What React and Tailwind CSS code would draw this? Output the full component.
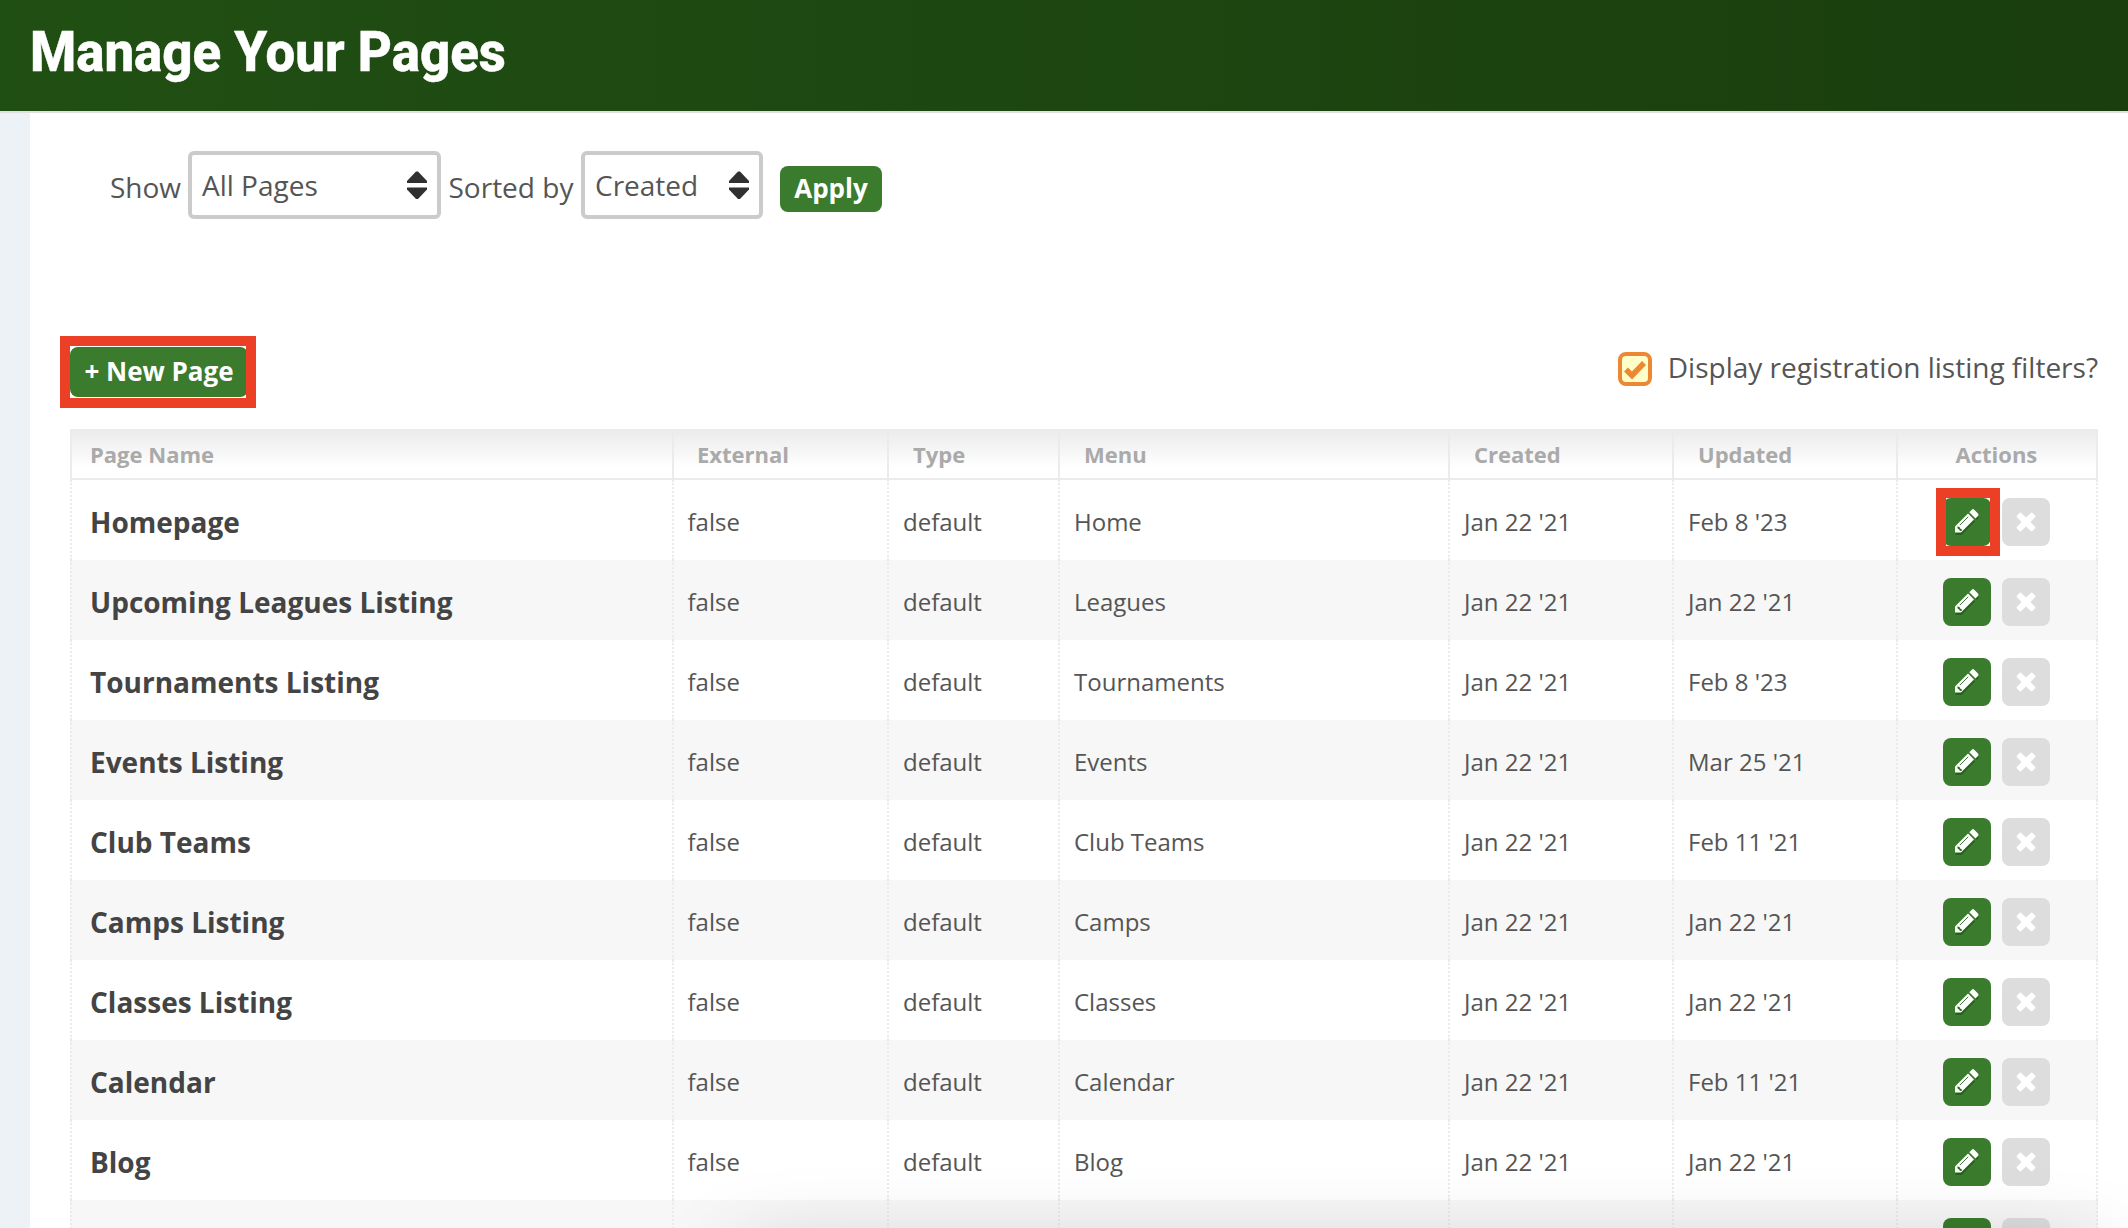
import React from "react";

const COLS =
  "grid grid-cols-[602px_215px_171px_390px_224px_224px_202px]";

const ROWS = [
  ["Homepage", "Home", "Jan 22 '21", "Feb 8 '23"],
  ["Upcoming Leagues Listing", "Leagues", "Jan 22 '21", "Jan 22 '21"],
  ["Tournaments Listing", "Tournaments", "Jan 22 '21", "Feb 8 '23"],
  ["Events Listing", "Events", "Jan 22 '21", "Mar 25 '21"],
  ["Club Teams", "Club Teams", "Jan 22 '21", "Feb 11 '21"],
  ["Camps Listing", "Camps", "Jan 22 '21", "Jan 22 '21"],
  ["Classes Listing", "Classes", "Jan 22 '21", "Jan 22 '21"],
  ["Calendar", "Calendar", "Jan 22 '21", "Feb 11 '21"],
  ["Blog", "Blog", "Jan 22 '21", "Jan 22 '21"],
  ["", "", "", ""],
];

const HEADS = [
  ["Page Name", "pl-[18px]"],
  ["External", "pl-[23px]"],
  ["Type", "pl-6"],
  ["Menu", "pl-6"],
  ["Created", "pl-6"],
  ["Updated", "pl-6"],
  ["Actions", "pl-[57.500px]"],
];

function Arrows() {
  return (
    <svg width="22" height="28" viewBox="0 0 22 28" fill="#303030">
      <path d="M10 .5h2L21 10v2H1v-2z" />
      <path d="M1 16.500h20v2L12 28h-2L1 18.500z" />
    </svg>
  );
}

function SelectBox({ label, className }) {
  return (
    <div
      className={
        "flex h-[68px] items-center justify-between rounded-md border-4 border-[#cbcbcb] bg-white pl-[10px] pr-[9px] text-[28px] text-[#555] " +
        className
      }
    >
      <span className="whitespace-nowrap pb-px">{label}</span>
      <Arrows />
    </div>
  );
}

function Pencil() {
  return (
    <svg width="26" height="28" viewBox="0 0 26 28" className="overflow-visible">
      <g fill="#1c4d12" opacity=".6" transform="translate(0.500 2.500)">
        <path d="M1 18.500 14.500 5l6 6L7 24.500H1z" />
        <path d="M16 3.500 18.500 1l6 6-2.500 2.500z" />
      </g>
      <path d="M1 18.500 14 5.500l6 6L7 24.500H1z" fill="#fff" />
      <path
        d="M15.300 4.200 17.800 1.700q1.200-1.200 2.400 0l3.800 3.800q1.200 1.200 0 2.400l-2.600 2.500z"
        fill="#fff"
      />
      <path d="M5.800 17.200 14.200 8.800" stroke="#3a7b2d" strokeWidth="1" />
      <path d="M3.300 18.600l2.300.3.400 1.600 1.600.5.300 1.700-1.800.2-1-1.500-1.500-.8z" fill="#2b6a20" />
    </svg>
  );
}

function Cross() {
  return (
    <svg width="20" height="20" viewBox="0 0 20 20">
      <path
        d="M.9 5.200Q.2 4.300.9 3.500L3.500.9Q4.300.2 5.200.9L10 5.600 14.800.9Q15.700.2 16.500.9l2.600 2.600q.7.800 0 1.700L14.400 10l4.700 4.800q.7.900 0 1.700l-2.600 2.600q-.8.700-1.700 0L10 14.400l-4.800 4.700q-.9.700-1.700 0L.9 16.500q-.7-.8 0-1.700L5.600 10z"
        fill="#fff"
      />
    </svg>
  );
}

function Row({ row, index }) {
  const cell = "border-l-2 border-dotted border-[#ebebeb] flex items-center pb-[1px]";
  return (
    <div
      className={
        COLS + " h-20 text-[24px] text-[#555] " + (index % 2 ? "bg-[#f7f7f7]" : "bg-white")
      }
    >
      <div className={cell + " pl-[18px] text-[28px] font-bold text-[#444]"}>
        <span className="pt-[4px]">{row[0]}</span>
      </div>
      <div className={cell + " pl-[13.500px]"}>
        <span className="pt-1">{row[0] && "false"}</span>
      </div>
      <div className={cell + " pl-[14px]"}>
        <span className="pt-1">{row[0] && "default"}</span>
      </div>
      <div className={cell + " pl-[14px]"}>
        <span className="pt-1">{row[1]}</span>
      </div>
      <div className={cell + " pl-[14px]"}>
        <span className="pt-1">{row[2]}</span>
      </div>
      <div className={cell + " pl-[14px]"}>
        <span className="pt-1">{row[3]}</span>
      </div>
      <div className="flex items-start gap-[11px] border-x-2 border-dotted border-[#ebebeb] pl-[45px] pt-[18px]">
        <div className="relative flex h-12 w-12 items-center justify-center rounded-lg bg-[#3a7b2d]">
          <Pencil />
          {index === 0 && (
            <span className="absolute -left-[7px] -top-[10px] h-[68px] w-16 border-10 border-[#eb4026]" />
          )}
        </div>
        <div className="flex h-12 w-12 items-center justify-center rounded-lg bg-[#dddddd]">
          <Cross />
        </div>
      </div>
    </div>
  );
}

export default function App() {
  return (
    <div className="relative flex h-[1228px] w-[2128px] flex-col overflow-hidden bg-[#edf2f6] font-['Open_Sans',sans-serif]">
      <header className="h-[113px] shrink-0 border-b-2 border-[#e0e0e0] bg-linear-to-r from-[#204f13] to-[#1a3e0e] pl-[30px] pt-[10px]">
        <h1 className="origin-left scale-x-[0.96] whitespace-nowrap font-[Roboto,sans-serif] text-[55px] font-extrabold leading-[84px] text-white [-webkit-text-stroke:0.500px_white]">
          Manage Your Pages
        </h1>
      </header>
      <main className="ml-[30px] flex-1 bg-white pl-10">
        <div className="flex h-[223px] items-start pl-[39px] pt-[38px] text-[28px] text-[#555]">
          <span className="w-[79px] pl-px pt-[15px]">Show</span>
          <SelectBox label="All Pages" className="w-[253px]" />
          <span className="w-[140px] whitespace-nowrap pl-[7.500px] pt-[15px]">Sorted by</span>
          <SelectBox label="Created" className="w-[182px]" />
          <button className="ml-[17px] mt-[15px] h-[46px] w-[102px] rounded-lg bg-[#3a7b2d] pb-[2px] text-[26px] font-bold text-white">
            Apply
          </button>
        </div>
        <div className="flex h-[93px] w-[2028px] items-start justify-between">
          <div className="-ml-[10px] h-[72px] w-[196px] overflow-hidden border-10 border-[#eb4026] py-[1px]">
            <button className="h-[50px] w-[178px] whitespace-nowrap rounded-lg bg-[#3a7b2d] pb-[2px] text-[26px] font-bold text-white">
              + New Page
            </button>
          </div>
          <label className="flex items-start pt-[10px] text-[28px] text-[#555]">
            <span className="mt-[6px] flex h-[34px] w-[34px] items-center justify-center rounded-lg border-4 border-[#ec8733] bg-[#fffdc8]">
              <svg width="24" height="22" viewBox="0 0 24 22">
                <path d="M3 11.500l6 6L21 5" fill="none" stroke="#ec8733" strokeWidth="5.500" />
              </svg>
            </span>
            <span className="ml-4 whitespace-nowrap">Display registration listing filters?</span>
          </label>
        </div>
        <section className="w-[2028px]">
          <div
            className={
              COLS +
              " h-[51px] border-b-2 border-r-2 border-[#ebebeb] bg-linear-to-b from-[#ebebeb] to-white to-80% text-[22px] font-bold leading-[50px] text-[#aaa]"
            }
          >
            {HEADS.map(([name, pad]) => (
              <div key={name} className={"border-l-2 border-[#ebebeb] " + pad}>
                {name}
              </div>
            ))}
          </div>
          {ROWS.map((row, i) => (
            <Row key={i} row={row} index={i} />
          ))}
        </section>
      </main>
      {/* Shadow cast by a panel that sits just below the viewport */}
      <div className="pointer-events-none absolute left-[740px] top-[1258px] h-20 w-[1360px] shadow-[0_0_90px_rgba(0,0,0,0.220)]" />
    </div>
  );
}
